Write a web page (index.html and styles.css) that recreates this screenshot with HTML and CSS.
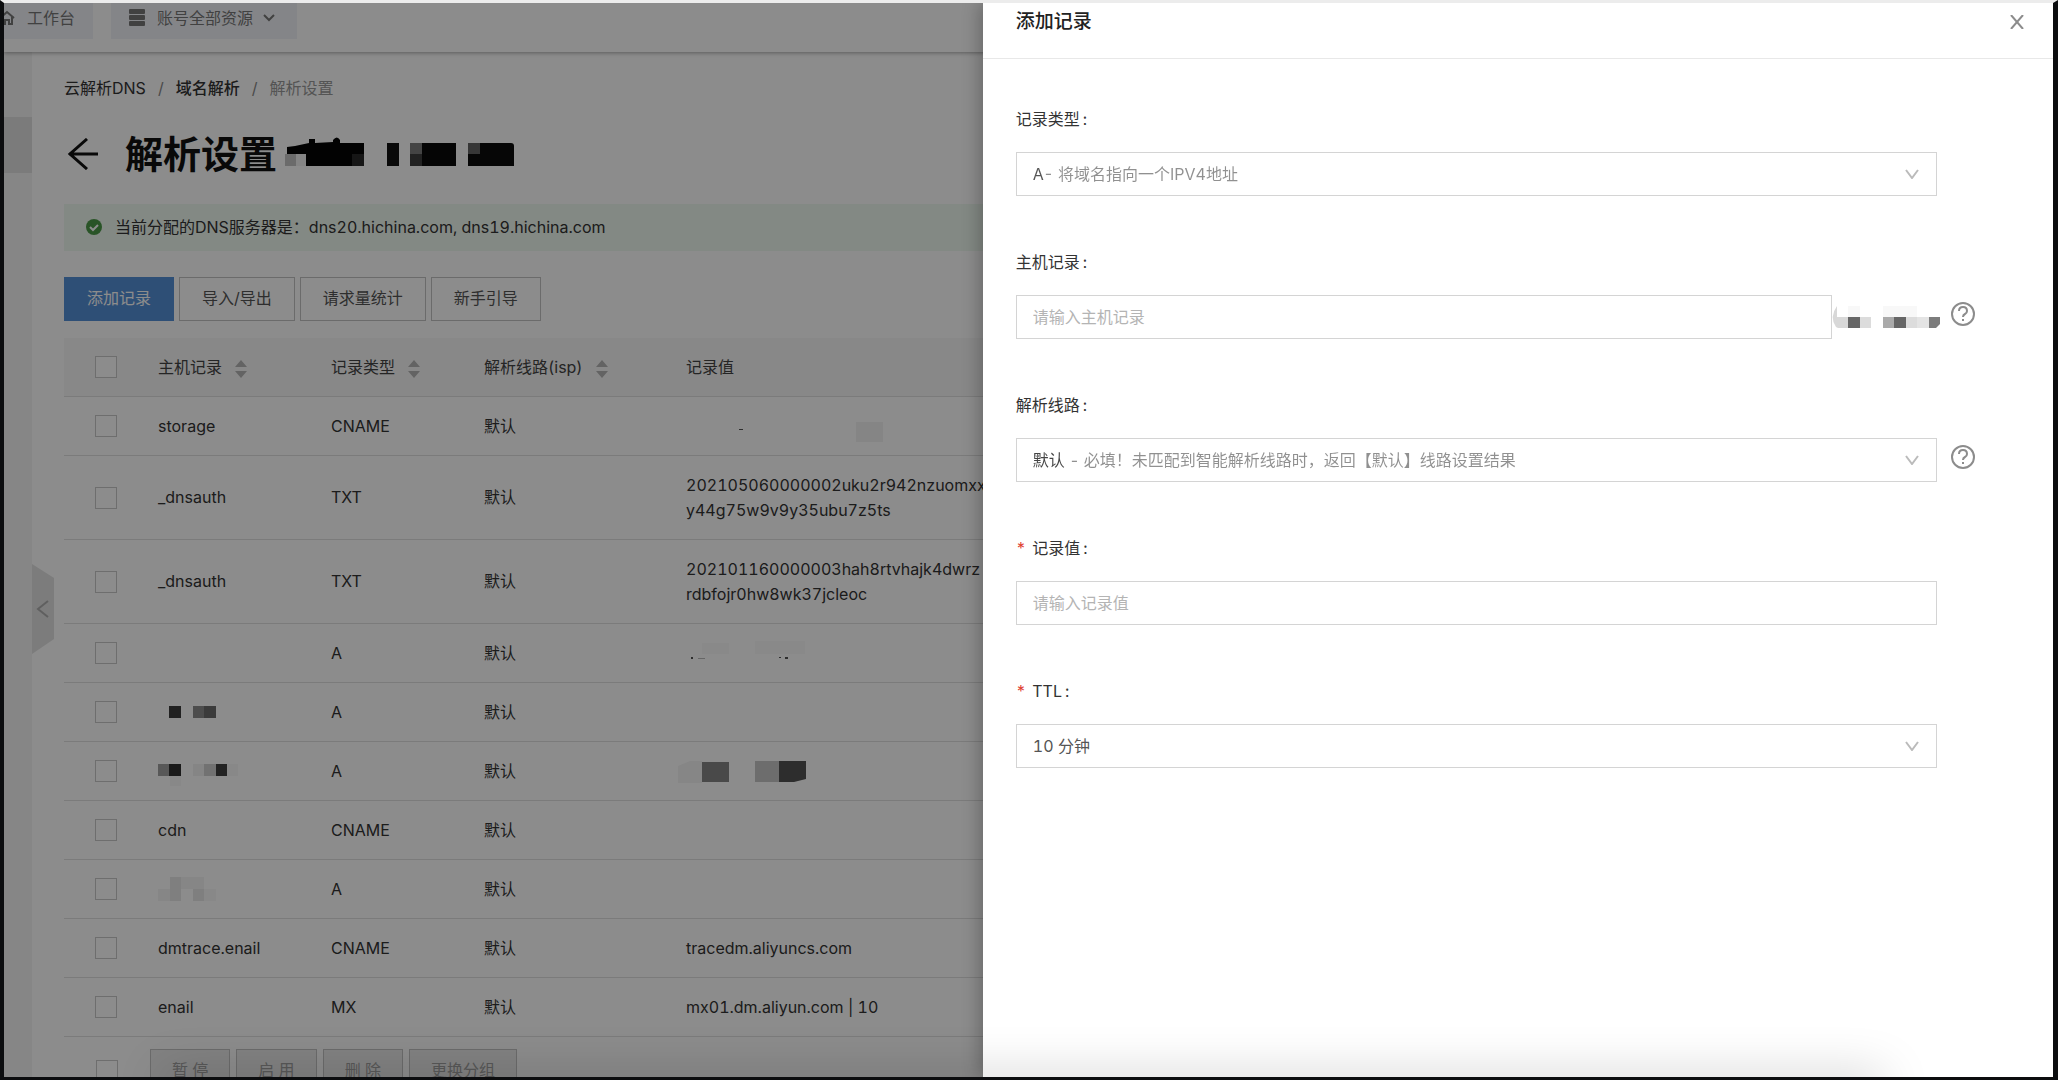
FILE: index.html
```html
<!DOCTYPE html>
<html lang="zh-CN">
<head>
<meta charset="utf-8">
<meta name="viewport" content="width=device-width, initial-scale=1">
<title>解析设置</title>
<link rel="stylesheet" href="styles.css">
</head>
<body>
<div class="screen">
  <header class="topbar">
    <a class="topbar-item home" href="#">
      <svg width="16" height="16" viewBox="0 0 16 16" fill="none" stroke="currentColor" stroke-width="2"><path d="M1 8 8 2l7 6M3 7v7h3v-4h4v4h3V7"/></svg>
      <span>工作台</span>
    </a>
    <button class="topbar-item" type="button">
      <svg width="16" height="18" viewBox="0 0 16 18" fill="currentColor"><rect width="16" height="5" rx="1"/><rect y="6" width="16" height="5" rx="1"/><rect y="12" width="16" height="5" rx="1"/></svg>
      <span>账号全部资源</span>
      <svg class="caret" width="12" height="8" viewBox="0 0 12 8" fill="none" stroke="currentColor" stroke-width="2"><path d="m1 1 5 5 5-5"/></svg>
    </button>
  </header>

  <div class="body">
    <nav class="sidebar" aria-label="侧边栏">
      <a class="side-current" href="#" aria-label="解析设置"></a>
      <button class="collapse" type="button" aria-label="收起">
        <svg width="22" height="90" viewBox="0 0 22 90"><path d="M0 0 22 14V75L0 90Z" fill="#e2e2e2"/><path d="M16 37 6 45l10 8" fill="none" stroke="#aeaeae" stroke-width="2"/></svg>
      </button>
    </nav>

    <main class="content">
      <nav class="breadcrumb" aria-label="面包屑">
        <a href="#">云解析DNS</a><span class="sep">/</span><a href="#" class="strong">域名解析</a><span class="sep">/</span><span class="here">解析设置</span>
      </nav>

      <div class="title-row">
        <a class="back" href="#" aria-label="返回">
          <svg width="32" height="32" viewBox="0 0 32 32" fill="none" stroke="currentColor" stroke-width="3"><path d="M20 1 3 16l17 15M2 16h29"/></svg>
        </a>
        <h1>解析设置</h1>
        <svg class="masked-title" width="230" height="30" viewBox="0 0 230 30" aria-hidden="true">
          <path d="M0 18h11v12H0z" fill="#c4c4c4"/>
          <path d="M11 18h11v12H11z" fill="#f2f2f2"/>
          <path d="M2 11 10 10 24 7V3h6v4l18-1V4q4-5 7 0v3h24v23H21V18H2Z" fill="#050505"/>
          <path d="M67 18h12v12H67z" fill="#282828"/>
          <path d="M102 7h12v23h-12z" fill="#111"/>
          <path d="M125 7h46v23h-46z" fill="#0a0a0a"/><path d="M125 7h12v11h-12z" fill="#7c7c7c"/><path d="M125 18h12v12h-12z" fill="#3e3e3e"/>
          <path d="M183 7h43q3 0 3 3v20h-46z" fill="#0c0c0c"/><path d="M183 7h12v11h-12z" fill="#646464"/>
        </svg>
      </div>

      <div class="notice" role="status">
        <svg width="16" height="16" viewBox="0 0 16 16"><circle cx="8" cy="8" r="8" fill="#4c9a48"/><path d="m4 8 3 3 5-5" fill="none" stroke="#fff" stroke-width="2"/></svg>
        <span>当前分配的DNS服务器是：dns20.hichina.com, dns19.hichina.com</span>
      </div>

      <div class="toolbar">
        <button class="btn primary" type="button">添加记录</button>
        <button class="btn" type="button">导入/导出</button>
        <button class="btn" type="button">请求量统计</button>
        <button class="btn" type="button">新手引导</button>
      </div>

      <table class="records">
        <colgroup><col class="c-check"><col class="c-host"><col class="c-type"><col class="c-line"><col></colgroup>
        <thead>
          <tr>
            <th class="check"><input type="checkbox" aria-label="全选"></th>
            <th>主机记录<svg class="sort" width="12" height="18" viewBox="0 0 12 18"><path d="M6 0l6 7H0zM6 18l6-7H0z"/></svg></th>
            <th>记录类型<svg class="sort" width="12" height="18" viewBox="0 0 12 18"><path d="M6 0l6 7H0zM6 18l6-7H0z"/></svg></th>
            <th>解析线路(isp)<svg class="sort" width="12" height="18" viewBox="0 0 12 18"><path d="M6 0l6 7H0zM6 18l6-7H0z"/></svg></th>
            <th>记录值</th>
          </tr>
        </thead>
        <tbody>
          <tr><td class="check"><input type="checkbox" aria-label="storage"></td><td>storage</td><td>CNAME</td><td>默认</td>
            <td><svg class="mask-art" width="200" height="24" viewBox="0 0 200 24" aria-hidden="true"><path d="M53 15h4v1h-4z" fill="#555"/><path d="M170 8h27v20h-27z" fill="#f3f3f3"/></svg></td></tr>
          <tr class="tall"><td class="check"><input type="checkbox" aria-label="_dnsauth"></td><td>_dnsauth</td><td>TXT</td><td>默认</td><td>202105060000002uku2r942nzuomxx<br>y44g75w9v9y35ubu7z5ts</td></tr>
          <tr class="tall"><td class="check"><input type="checkbox" aria-label="_dnsauth"></td><td>_dnsauth</td><td>TXT</td><td>默认</td><td>202101160000003hah8rtvhajk4dwrz<br>rdbfojr0hw8wk37jcleoc</td></tr>
          <tr><td class="check"><input type="checkbox" aria-label="记录 4"></td>
            <td></td><td>A</td><td>默认</td>
            <td><svg class="mask-art" width="130" height="24" viewBox="0 0 130 24" aria-hidden="true"><path d="M16 2h27v11H16zM69 0h50v13H69z" fill="#fafafa"/><path d="M5 16h2v2H5zM93 16h2v1h-2zM99 16h3v2h-3z" fill="#555"/><path d="M12 17h7v1h-7z" fill="#bbb"/></svg></td></tr>
          <tr><td class="check"><input type="checkbox" aria-label="记录 5"></td>
            <td><svg class="mask-art" width="60" height="24" viewBox="0 0 60 24" aria-hidden="true"><path d="M11 6h12v12H11z" fill="#3c3c3c"/><path d="M35 6h11v12H35z" fill="#8c8c8c"/><path d="M46 6h12v12H46z" fill="#6c6c6c"/></svg></td><td>A</td><td>默认</td>
            <td></td></tr>
          <tr><td class="check"><input type="checkbox" aria-label="记录 6"></td>
            <td><svg class="mask-art" width="80" height="24" viewBox="0 0 80 24" aria-hidden="true"><path d="M0 5h11v12H0z" fill="#a0a0a0"/><path d="M11 5h12v12H11z" fill="#303030"/><path d="M35 5h11v12H35z" fill="#f2f2f2"/><path d="M46 5h12v12H46z" fill="#d0d0d0"/><path d="M58 5h11v12H58z" fill="#404040"/><path d="M69 5h11v12H69zM12 17h11v10H12z" fill="#f8f8f8"/></svg></td><td>A</td><td>默认</td>
            <td><svg class="mask-art" width="130" height="24" viewBox="0 0 130 24" aria-hidden="true"><path d="M-8 7 4 2h12v22H-8z" fill="#f4f4f4"/><path d="M16 3h27v20H16z" fill="#868686"/><path d="M69 2h24v21H69z" fill="#c6c6c6"/><path d="M93 2h27v18l-12 3H93z" fill="#525252"/></svg></td></tr>
          <tr><td class="check"><input type="checkbox" aria-label="cdn"></td><td>cdn</td><td>CNAME</td><td>默认</td><td></td></tr>
          <tr><td class="check"><input type="checkbox" aria-label="记录 8"></td>
            <td><svg class="mask-art" width="80" height="24" viewBox="0 0 80 24" aria-hidden="true"><path d="M0 12h12v12H0zM23 0h23v12H23z" fill="#f4f4f4"/><path d="M12 0h11v24H12zM35 12h11v12H35z" fill="#e8e8e8"/><path d="M46 12h12v12H46z" fill="#f8f8f8"/></svg></td><td>A</td><td>默认</td>
            <td></td></tr>
          <tr><td class="check"><input type="checkbox" aria-label="dmtrace.enail"></td><td>dmtrace.enail</td><td>CNAME</td><td>默认</td><td>tracedm.aliyuncs.com</td></tr>
          <tr><td class="check"><input type="checkbox" aria-label="enail"></td><td>enail</td><td>MX</td><td>默认</td><td>mx01.dm.aliyun.com | 10</td></tr>
        </tbody>
      </table>

      <div class="batch">
        <input type="checkbox" aria-label="批量选择">
        <button class="btn" type="button" disabled>暂 停</button>
        <button class="btn" type="button" disabled>启 用</button>
        <button class="btn" type="button" disabled>删 除</button>
        <button class="btn" type="button" disabled>更换分组</button>
      </div>
    </main>
  </div>

  <div class="mask"></div>

  <aside class="drawer" role="dialog" aria-labelledby="drawer-title">
    <div class="drawer-head">
      <h2 id="drawer-title">添加记录</h2>
      <button class="close" type="button" aria-label="关闭">
        <svg width="14" height="14" viewBox="0 0 14 14" fill="none" stroke="currentColor" stroke-width="2"><path d="m1 0 12 14M13 0 1 14"/></svg>
      </button>
    </div>
    <form class="form">
      <div class="field">
        <label for="type">记录类型<span class="colon">:</span></label>
        <div class="select">
          <select id="type" class="two-tone tone-a"><option>A- 将域名指向一个IPV4地址</option></select>
          <svg width="14" height="10" viewBox="0 0 14 10"><path d="m1 1 6 8 6-8"/></svg>
        </div>
      </div>
      <div class="field">
        <label for="host">主机记录<span class="colon">:</span></label>
        <div class="host">
          <input id="host" type="text" placeholder="请输入主机记录">
          <svg class="suffix" width="105" height="24" viewBox="0 0 105 24" aria-hidden="true"><path d="M5 1Q-3 12 4 22l2 1h10V12H5z" fill="#d8d8d8"/><path d="M16 1h12v11H16zM51 1h34v11H51z" fill="#f8f8f8"/><path d="M16 12h12v11H16zM62 12h12v11H62z" fill="#666"/><path d="M28 12h11v11H28zM74 12h11v11H74z" fill="#dcdcdc"/><path d="M51 12h11v11H51z" fill="#aaa"/><path d="M85 12h12v11H85z" fill="#e4e4e4"/><path d="M97 12h11v7l-4 4h-7z" fill="#7c7c7c"/></svg>
        </div>
        <button class="help" type="button" aria-label="帮助"><svg width="26" height="26" viewBox="0 0 26 26"><circle cx="13" cy="13" r="11"/><path d="M9 10q0-4 4-4t4 4q0 2-2 3t-2 3M13 18v2"/></svg></button>
      </div>
      <div class="field">
        <label for="line">解析线路<span class="colon">:</span></label>
        <div class="select">
          <select id="line" class="two-tone tone-b"><option>默认 - 必填！未匹配到智能解析线路时，返回【默认】线路设置结果</option></select>
          <svg width="14" height="10" viewBox="0 0 14 10"><path d="m1 1 6 8 6-8"/></svg>
        </div>
        <button class="help" type="button" aria-label="帮助"><svg width="26" height="26" viewBox="0 0 26 26"><circle cx="13" cy="13" r="11"/><path d="M9 10q0-4 4-4t4 4q0 2-2 3t-2 3M13 18v2"/></svg></button>
      </div>
      <div class="field">
        <label for="value"><span class="req">*</span>记录值<span class="colon">:</span></label>
        <input id="value" type="text" placeholder="请输入记录值">
      </div>
      <div class="field">
        <label for="ttl"><span class="req">*</span>TTL<span class="colon">:</span></label>
        <div class="select">
          <select id="ttl"><option>10 分钟</option></select>
          <svg width="14" height="10" viewBox="0 0 14 10"><path d="m1 1 6 8 6-8"/></svg>
        </div>
      </div>
    </form>
  </aside>
  <div class="bottom-shade"></div>
</div>
</body>
</html>
```
FILE: styles.css
```css
* { box-sizing: border-box; }

body {
  margin: 0;
  font: 16px/24px Inter, "Noto Sans CJK SC", sans-serif;
  font-variant-numeric: tabular-nums;
  color: #333;
  background: #000;
}

a { color: inherit; text-decoration: none; }
button, input, select { font: inherit; font-variant-numeric: inherit; color: inherit; border-radius: 0; }
button { padding: 0; border: 0; background: none; }
svg { flex: none; }

/* Window frame around the console */
.screen {
  position: relative;
  display: flex;
  flex-direction: column;
  height: 100vh;
  overflow: hidden;
  background: #fff;
  border: solid #0c0d0f;
  border-width: 3px 5px 3px 4px;
  border-top-color: #ececec;
}

/* Top bar */
.topbar {
  position: relative;
  z-index: 1;
  display: flex;
  align-items: flex-start;
  gap: 18px;
  flex: none;
  height: 49px;
  background: #fff;
  box-shadow: 0 1px 4px rgba(0, 0, 0, .35);
}
.topbar-item {
  display: flex;
  align-items: center;
  gap: 12px;
  height: 36px;
  padding: 0 18px 6px;
  color: #777;
  background: #f1f3f8;
}
.topbar-item.home { margin-left: -8px; padding-left: 3px; }
.caret { margin: 0 4px 0 -2px; }

/* Page */
.body { display: flex; flex: 1; min-height: 0; }
.sidebar {
  position: relative;
  flex: none;
  width: 28px;
  padding-top: 65px;
  background: #f4f4f4;
}
.side-current { display: block; height: 56px; background: #e0e0e0; }
.collapse { position: absolute; top: 512px; left: 100%; width: 22px; height: 90px; }
.collapse svg { display: block; }

.content { flex: 1; min-width: 0; padding: 24px 32px 0; }

.breadcrumb { display: flex; margin-bottom: 26px; }
.breadcrumb .sep { margin: 0 12px; color: #888; }
.breadcrumb .strong { font-weight: 500; }
.breadcrumb .here { color: #999; }

.title-row {
  display: flex;
  align-items: center;
  height: 56px;
  margin-bottom: 22px;
  color: #111;
}
.back { display: flex; margin: 0 26px 0 3px; }
.masked-title { margin-bottom: 6px; }
h1 { margin: 0 8px 0 0; font-size: 38px; line-height: 56px; font-weight: 700; }

.notice {
  display: flex;
  align-items: center;
  gap: 13px;
  height: 47px;
  margin-bottom: 26px;
  padding: 0 22px 2px;
  background: #eff9f1;
}

.toolbar { display: flex; gap: 5px; margin-bottom: 17px; }
.btn {
  height: 44px;
  padding: 0 22px 2px;
  border: 1px solid #c4c4c4;
  color: #555;
}
.btn.primary { border-color: #5490d8; background: #5490d8; color: #fff; }
.btn:disabled { padding: 0 21px 2px; border-color: #c4c4c4; background: #ededed; color: #a0a0a0; }

input[type="checkbox"] {
  display: block;
  appearance: none;
  width: 22px;
  height: 22px;
  margin: 0;
  border: 1px solid #c8c8c8;
  background: #fff;
}

/* Records table */
.records { width: 100%; table-layout: fixed; border-collapse: separate; border-spacing: 0; }
.c-check { width: 94px; }
.c-host { width: 173px; }
.c-type { width: 153px; }
.c-line { width: 202px; }
.records th, .records td {
  height: 59px;
  padding: 0;
  border-bottom: 1px solid #e0e0e0;
  text-align: left;
  font-weight: 400;
  line-height: 25px;
  white-space: nowrap;
}
.records th { background: #f8f8f8; color: #444; }
.records .tall td { height: 84px; }
.records .check { padding-left: 31px; }
.sort { margin-left: 13px; vertical-align: -5px; fill: #b4b4b4; }
.mask-art { display: block; overflow: visible; }

.batch { display: flex; align-items: center; gap: 6px; padding: 12px 0 0 32px; }
.batch input { margin-right: 26px; }

.mask { position: absolute; inset: 0; z-index: 2; background: rgba(0, 0, 0, .45); }

/* Drawer */
.drawer {
  position: absolute;
  z-index: 3;
  top: 0;
  right: 0;
  bottom: 0;
  width: 52vw;
  background: #fff;
  box-shadow: -4px 0 16px rgba(0, 0, 0, .25);
}
.drawer-head {
  display: flex;
  align-items: flex-start;
  justify-content: space-between;
  height: 56px;
  padding: 7px 20px 0 33px;
  border-bottom: 1px solid #e8e8e8;
}
h2 { margin: 0; font-size: 19px; line-height: 24px; font-weight: 500; color: #222; }
.close { display: flex; padding: 5px 9px; color: #8c8c8c; }

.form { display: grid; gap: 52px; padding: 46px 77px 0 33px; }
.field {
  display: grid;
  grid-template-columns: 1fr 26px;
  column-gap: 13px;
  row-gap: 19px;
}
.field label { grid-column: 1 / -1; display: flex; align-items: center; height: 28px; }
.colon { margin-left: 3px; }
.req { margin-right: 6px; color: #e04030; }

input[type="text"], select {
  display: block;
  width: 100%;
  min-width: 0;
  height: 44px;
  padding: 0 16px;
  border: 1px solid #d4d4d4;
  background: #fff;
  color: #555;
  appearance: none;
}
::placeholder { color: #b4b4b4; opacity: 1; }
.select { position: relative; }
.select svg {
  position: absolute;
  right: 18px;
  top: 17px;
  fill: none;
  stroke: #bbb;
  stroke-width: 2;
  pointer-events: none;
}
/* The option's key is dark, its description is grey */
.two-tone { background-clip: text; -webkit-background-clip: text; color: transparent; }
.tone-a { background-image: linear-gradient(90deg, #555 27px, #909090 27px); }
.tone-b { background-image: linear-gradient(90deg, #444 49px, #909090 49px); }

.host { display: flex; align-items: center; min-width: 0; }
.host input { flex: 1; }
.suffix { overflow: visible; }
.help { display: flex; align-self: start; padding-top: 6px; }
.help svg { fill: none; stroke: #8c8c8c; stroke-width: 2; }

.bottom-shade {
  position: absolute;
  z-index: 4;
  left: 160px;
  right: 170px;
  top: 100%;
  height: 20px;
  box-shadow: 0 0 48px rgba(0, 0, 0, .25);
  pointer-events: none;
}
```
